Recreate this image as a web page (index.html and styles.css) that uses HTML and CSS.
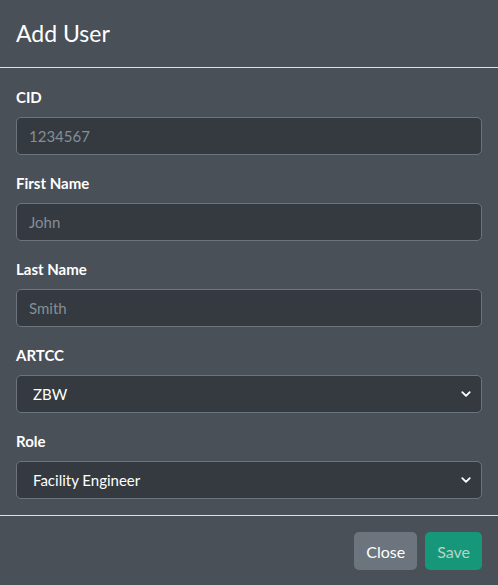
FILE: index.html
```html
<!DOCTYPE html>
<html lang="en">
<head>
    <meta charset="UTF-8">
    <meta name="viewport" content="width=device-width, initial-scale=1.0">
    <title>Add User</title>
    <link rel="stylesheet" href="styles.css">
</head>
<body>
    <div class="modal">
        <div class="modal-header">
            <h5 class="modal-title">Add User</h5>
        </div>

        <div class="modal-body">
            <div class="field">
                <label class="field-label" for="cid">CID</label>
                <input class="field-input" id="cid" type="text" placeholder="1234567">
            </div>
            <div class="field">
                <label class="field-label" for="first">First Name</label>
                <input class="field-input" id="first" type="text" placeholder="John">
            </div>
            <div class="field">
                <label class="field-label" for="last">Last Name</label>
                <input class="field-input" id="last" type="text" placeholder="Smith">
            </div>
            <div class="field">
                <label class="field-label" for="artcc">ARTCC</label>
                <select class="field-select" id="artcc">
                    <option>ZBW</option>
                </select>
            </div>
            <div class="field">
                <label class="field-label" for="role">Role</label>
                <select class="field-select" id="role">
                    <option>Facility Engineer</option>
                </select>
            </div>
        </div>

        <div class="modal-footer">
            <button class="btn btn-close" type="button">Close</button>
            <button class="btn btn-save" type="button" disabled>Save</button>
        </div>
    </div>
</body>
</html>
```

FILE: styles.css
```css
* {
    margin: 0;
    padding: 0;
    box-sizing: border-box;
}

body {
    font-family: Lato, "Noto Sans", sans-serif;
    font-size: 16px;
    line-height: 1.5;
    background: #495057;
    color: #fff;
}

.modal {
    width: 498px;
    height: 585px;
    background: #495057;
}

.modal-header {
    padding: 16px;
    border-bottom: 1px solid #dee2e6;
}

.modal-title {
    font-size: 23px;
    font-weight: 400;
    line-height: 35px;
}

.modal-body {
    padding: 17px 16px 0;
}

.field {
    display: flex;
    flex-direction: column;
    margin-bottom: 16px;
}

.field-label {
    font-weight: 700;
    font-size: 15px;
    line-height: 24px;
    margin-bottom: 8px;
}

.field-input,
.field-select {
    height: 38px;
    width: 100%;
    font-family: inherit;
    font-size: 15px;
    color: #fff;
    background-color: #343a40;
    border: 1px solid #6c757d;
    border-radius: 5px;
    outline: none;
}

.field-input {
    padding: 6px 12px;
}

.field-input::placeholder {
    color: #868e96;
}

.field-select {
    appearance: none;
    -webkit-appearance: none;
    padding: 6px 36px 6px 16px;
    background-image: url("data:image/svg+xml,%3Csvg xmlns='http://www.w3.org/2000/svg' viewBox='0 0 16 16'%3E%3Cpath fill='none' stroke='%23ffffff' stroke-linecap='round' stroke-linejoin='round' stroke-width='2.4' d='M3 5.5l5 5 5-5'/%3E%3C/svg%3E");
    background-repeat: no-repeat;
    background-position: right 8px center;
    background-size: 14px 12px;
}

.modal-footer {
    display: flex;
    justify-content: flex-end;
    gap: 8px;
    padding: 16px;
    border-top: 1px solid #dee2e6;
}

.btn {
    height: 38px;
    padding: 6px 12px;
    font-family: inherit;
    font-size: 16px;
    border: none;
    border-radius: 5px;
    color: #fff;
}

.btn-close {
    background: #6c757d;
}

.btn-save {
    background: #17977a;
    color: #b5d3c7;
}
```
